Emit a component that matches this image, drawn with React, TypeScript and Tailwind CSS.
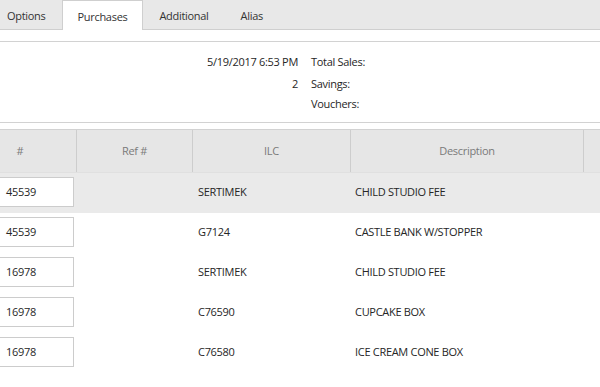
import React from "react";

const tabs = ["Options", "Purchases", "Additional", "Alias"];

const rows = [
  { num: "45539", ref: "", ilc: "SERTIMEK", desc: "CHILD STUDIO FEE", selected: true },
  { num: "45539", ref: "", ilc: "G7124", desc: "CASTLE BANK W/STOPPER" },
  { num: "16978", ref: "", ilc: "SERTIMEK", desc: "CHILD STUDIO FEE" },
  { num: "16978", ref: "", ilc: "C76590", desc: "CUPCAKE BOX" },
  { num: "16978", ref: "", ilc: "C76580", desc: "ICE CREAM CONE BOX" },
];

export default function App() {
  return (
    <div
      className="w-[600px] h-[387px] overflow-hidden bg-white text-[11px] tracking-[-0.3px] text-[#262626]"
      style={{ fontFamily: '"Open Sans", "Noto Sans", sans-serif' }}
    >
      {/* tab strip */}
      <div className="h-[30px] bg-[#e8e8e8] border-b border-[#cfcfcf] flex">
        <div className="flex -ml-[9px]">
          {tabs.map((t) => (
            <div
              key={t}
              className={
                t === "Purchases"
                  ? "h-[30px] px-[15px] pt-[3px] flex items-center bg-white border-x border-t border-[#cfcfcf] -mb-px text-[#333]"
                  : "h-[29px] px-4 pt-[3px] flex items-center text-[#333]"
              }
            >
              {t}
            </div>
          ))}
        </div>
      </div>

      {/* summary */}
      <div className="mt-[11px] border-y border-[#d2d2d2] pt-[10px] pb-[8px]">
        <div className="grid grid-cols-[298px_1fr] gap-x-[13px] gap-y-px">
          <div className="h-5 flex items-center justify-end">5/19/2017 6:53 PM</div>
          <div className="h-5 flex items-center">Total Sales:</div>
          <div className="h-5 flex items-center justify-end pt-[2px]">2</div>
          <div className="h-5 flex items-center pt-[2px]">Savings:</div>
          <div className="h-5" />
          <div className="h-5 flex items-center">Vouchers:</div>
        </div>
      </div>

      {/* grid */}
      <div className="mt-[6px] border-t border-[#d2d2d2]">
        <div className="h-[43px] bg-[#e6e6e6] border-b border-[#e0e0e0] flex text-[#7a7a7a]">
          <div className="w-[77px] border-r border-[#cdcdcd] flex items-center">
            <div className="w-[40px] text-center">#</div>
          </div>
          <div className="w-[116px] border-r border-[#cdcdcd] flex items-center justify-center">Ref #</div>
          <div className="w-[158px] border-r border-[#cdcdcd] flex items-center justify-center">ILC</div>
          <div className="w-[233px] border-r border-[#cdcdcd] flex items-center justify-center">Description</div>
          <div className="flex-1" />
        </div>
        {rows.map((r, i) => (
          <div key={i} className={"h-10 flex items-start pt-1 " + (r.selected ? "bg-[#eaeaea]" : "bg-white")}>
            <div className="w-[77px]">
              <div className="-ml-px w-[75px] h-[30px] bg-white border border-[#cccccc] pl-[6px] flex items-center">
                {r.num}
              </div>
            </div>
            <div className="w-[116px] h-[30px] flex items-center">{r.ref}</div>
            <div className="w-[158px] h-[30px] flex items-center pl-[5px]">{r.ilc}</div>
            <div className="w-[233px] h-[30px] flex items-center pl-[4px]">{r.desc}</div>
          </div>
        ))}
      </div>
    </div>
  );
}
